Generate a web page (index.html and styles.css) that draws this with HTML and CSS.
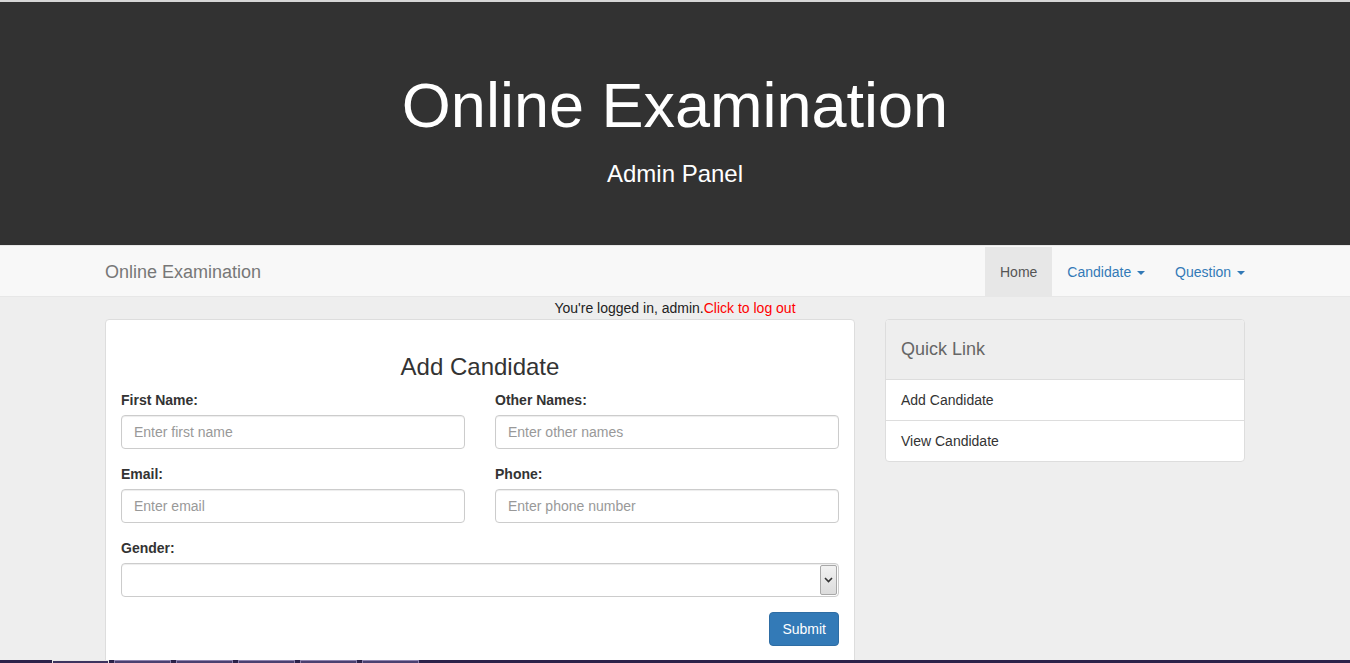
FILE: index.html
```html
<!DOCTYPE html>
<html lang="en">
<head>
<meta charset="utf-8">
<title>Online Examination - Admin Panel</title>
<link rel="stylesheet" href="styles.css">
</head>
<body>
<header class="jumbo">
  <h1 class="jumbo-title">Online Examination</h1>
  <p class="jumbo-sub">Admin Panel</p>
</header>
<nav class="navbar">
  <div class="container nav-inner">
    <a class="brand" href="#">Online Examination</a>
    <ul class="nav-right">
      <li><a class="nav-link active" href="#">Home</a></li>
      <li><a class="nav-link" href="#">Candidate <span class="caret"></span></a></li>
      <li><a class="nav-link" href="#">Question <span class="caret"></span></a></li>
    </ul>
  </div>
</nav>
<div class="logged">You're logged in, admin.<a class="logout" href="#">Click to log out</a></div>
<main class="container main-row">
  <section class="col-main">
    <div class="panel form-panel">
      <h3 class="form-title">Add Candidate</h3>
      <form class="form">
        <div class="form-row">
          <div class="form-group">
            <label class="label">First Name:</label>
            <input class="input" type="text" placeholder="Enter first name">
          </div>
          <div class="form-group">
            <label class="label">Other Names:</label>
            <input class="input" type="text" placeholder="Enter other names">
          </div>
        </div>
        <div class="form-row">
          <div class="form-group">
            <label class="label">Email:</label>
            <input class="input" type="text" placeholder="Enter email">
          </div>
          <div class="form-group">
            <label class="label">Phone:</label>
            <input class="input" type="text" placeholder="Enter phone number">
          </div>
        </div>
        <div class="form-group full">
          <label class="label">Gender:</label>
          <div class="select-wrap">
            <select class="select"><option></option><option>Male</option><option>Female</option></select>
            <span class="select-arrow"><svg width="9" height="6" viewBox="0 0 9 6"><path d="M1 1 L4.5 4.5 L8 1" fill="none" stroke="#333" stroke-width="1.6"/></svg></span>
          </div>
        </div>
        <div class="actions"><button class="btn" type="button">Submit</button></div>
      </form>
    </div>
  </section>
  <aside class="col-side">
    <div class="panel side-panel">
      <div class="side-heading">Quick Link</div>
      <a class="side-item" href="#">Add Candidate</a>
      <a class="side-item last" href="#">View Candidate</a>
    </div>
  </aside>
</main>
<div class="taskbar">
  <span class="task first"></span><span class="task"></span><span class="task"></span><span class="task"></span><span class="task"></span><span class="task"></span>
</div>
</body>
</html>
```
FILE: styles.css
```css
* { box-sizing: border-box; }
html, body { margin: 0; padding: 0; }
body {
  background: #eeeeee;
  font-family: "Liberation Sans", Arial, sans-serif;
  font-size: 14px;
  line-height: 20px;
  color: #333;
  overflow: hidden;
  height: 663px;
}
a { text-decoration: none; }

.jumbo {
  background: #323232;
  border-top: 2px solid #d6d6d6;
  color: #fff;
  text-align: center;
  padding: 69px 0 54px;
}
.jumbo-title {
  margin: 0;
  font-size: 63px;
  line-height: 69px;
  font-weight: normal;
}
.jumbo-sub {
  margin: 17px 0 0;
  font-size: 24px;
  line-height: 34px;
}

.container {
  width: 1170px;
  margin: 0 auto;
  padding: 0 15px;
}

.navbar {
  background: #f8f8f8;
  border-top: 1px solid #e7e7e7;
  border-bottom: 1px solid #e7e7e7;
}
.nav-inner {
  display: flex;
  justify-content: space-between;
  align-items: stretch;
  height: 50px;
}
.brand {
  color: #777;
  font-size: 18px;
  line-height: 20px;
  padding: 16px 0 14px;
}
.nav-right {
  list-style: none;
  margin: 0 -15px 0 0;
  padding: 0;
  display: flex;
}
.nav-link {
  display: block;
  padding: 16px 15px 14px;
  line-height: 20px;
  color: #337ab7;
}
.nav-link.active {
  background: #e7e7e7;
  color: #555;
  margin-top: 1px;
  padding-top: 15px;
}
.caret {
  display: inline-block;
  width: 0;
  height: 0;
  margin-left: 2px;
  vertical-align: middle;
  border-top: 4px solid #337ab7;
  border-left: 4px solid transparent;
  border-right: 4px solid transparent;
}

.logged {
  text-align: center;
  line-height: 20px;
  padding-top: 1px;
  color: #222;
}
.logout { color: #ff0000; }

.main-row {
  display: flex;
  gap: 30px;
  margin-top: 1px;
}
.col-main { width: 750px; }
.col-side { width: 360px; }

.panel {
  background: #fff;
  border: 1px solid #ddd;
  border-radius: 4px;
}
.form-panel {
  padding: 15px 15px 30px;
}
.form-title {
  margin: 19px 0 10px;
  font-size: 24px;
  line-height: 26px;
  font-weight: normal;
  text-align: center;
  color: #333;
}
.form-row {
  display: flex;
  gap: 30px;
}
.form-group {
  flex: 1;
  margin-bottom: 15px;
  display: flex;
  flex-direction: column;
}
.label {
  font-weight: bold;
  line-height: 20px;
  margin-bottom: 5px;
  color: #333;
}
.input {
  height: 34px;
  padding: 6px 12px;
  font-family: "Liberation Sans", Arial, sans-serif;
  font-size: 14px;
  color: #555;
  border: 1px solid #ccc;
  border-radius: 4px;
  box-shadow: inset 0 1px 1px rgba(0,0,0,.075);
  background: #fff;
}
.input::placeholder { color: #999; }

.select-wrap {
  height: 34px;
  display: flex;
  border: 1px solid #ccc;
  border-radius: 4px;
  box-shadow: inset 0 1px 1px rgba(0,0,0,.075);
  background: #fff;
  padding: 0 1px 0 0;
  align-items: stretch;
}
.select {
  flex: 1;
  appearance: none;
  -webkit-appearance: none;
  border: 0;
  background: transparent;
  font-family: "Liberation Sans", Arial, sans-serif;
  font-size: 14px;
  padding: 6px 12px;
  outline: none;
}
.select-arrow {
  width: 17px;
  margin: 1px 0;
  border: 1px solid #a8a8a8;
  border-radius: 2px;
  background: linear-gradient(#f2f2f2, #dcdcdc);
  display: flex;
  align-items: center;
  justify-content: center;
}

.actions {
  display: flex;
  justify-content: flex-end;
}
.btn {
  font-family: "Liberation Sans", Arial, sans-serif;
  font-size: 14px;
  line-height: 20px;
  padding: 6px 12px;
  color: #fff;
  background: #337ab7;
  border: 1px solid #2e6da4;
  border-radius: 4px;
}

.side-heading {
  background: #eeeeee;
  color: #666;
  font-size: 18px;
  line-height: 21px;
  padding: 19px 15px;
  border-bottom: 1px solid #ddd;
  border-radius: 3px 3px 0 0;
}
.side-item {
  display: block;
  padding: 10px 15px;
  line-height: 20px;
  color: #333;
  border-bottom: 1px solid #ddd;
}
.side-item.last { border-bottom: 0; }

.taskbar {
  position: fixed;
  left: 0;
  right: 0;
  bottom: 0;
  height: 3px;
  background: #2b2249;
  display: flex;
  gap: 5px;
  padding-left: 52px;
}
.task {
  width: 57px;
  height: 3px;
  border-top: 1px solid #8c82ad;
  border-left: 1px solid #8c82ad;
  border-right: 1px solid #8c82ad;
  background: #4a4070;
}
.task.first {
  border-color: #e6e6e6;
  background: #3c335e;
}
```
